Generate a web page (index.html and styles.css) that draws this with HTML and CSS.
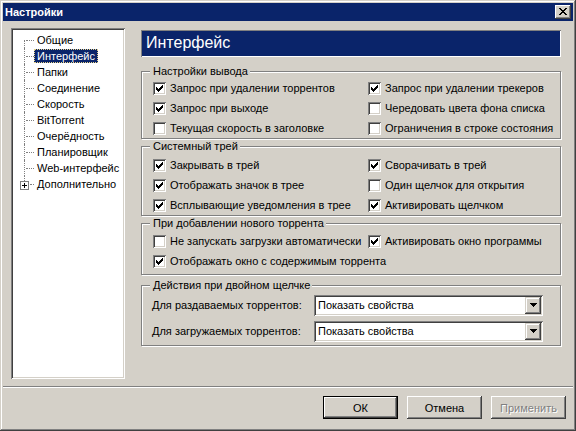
FILE: index.html
```html
<!DOCTYPE html>
<html lang="ru">
<head>
<meta charset="utf-8">
<title>Настройки</title>
<link rel="stylesheet" href="styles.css">
</head>
<body>
<div class="window">
  <div class="titlebar">
    <span class="title">Настройки</span>
    <button class="close" aria-label="Закрыть"><svg width="8" height="7" viewBox="0 0 8 7" shape-rendering="crispEdges"><path d="M0 0h2v1H0zM6 0h2v1H6zM1 1h2v1H1zM5 1h2v1H5zM2 2h4v1H2zM3 3h2v1H3zM2 4h4v1H2zM1 5h2v1H1zM5 5h2v1H5zM0 6h2v1H0zM6 6h2v1H6z"/></svg></button>
  </div>
  <div class="main">
    <ul class="tree">
      <li class="first"><span class="item">Общие</span></li>
      <li><span class="item sel">Интерфейс</span></li>
      <li><span class="item">Папки</span></li>
      <li><span class="item">Соединение</span></li>
      <li><span class="item">Скорость</span></li>
      <li><span class="item">BitTorrent</span></li>
      <li><span class="item">Очерёдность</span></li>
      <li><span class="item">Планировщик</span></li>
      <li><span class="item">Web-интерфейс</span></li>
      <li class="last"><span class="plus"><svg width="5" height="5" viewBox="0 0 5 5" shape-rendering="crispEdges"><path d="M0 2h5v1H0zM2 0h1v5H2z"/></svg></span><span class="item">Дополнительно</span></li>
    </ul>
    <div class="panel">
      <div class="header">Интерфейс</div>

      <fieldset class="group g1">
        <legend>Настройки вывода</legend>
        <div class="grid">
          <label class="cb"><span class="box"><svg class="chk" width="7" height="7" viewBox="0 0 7 7" shape-rendering="crispEdges"><path d="M6 0h1v1H6zM5 1h2v1H5zM0 2h1v1H0zM4 2h3v1H4zM0 3h2v1H0zM3 3h3v1H3zM0 4h5v1H0zM1 5h3v1H1zM2 6h1v1H2z"/></svg></span>Запрос при удалении торрентов</label>
          <label class="cb"><span class="box"><svg class="chk" width="7" height="7" viewBox="0 0 7 7" shape-rendering="crispEdges"><path d="M6 0h1v1H6zM5 1h2v1H5zM0 2h1v1H0zM4 2h3v1H4zM0 3h2v1H0zM3 3h3v1H3zM0 4h5v1H0zM1 5h3v1H1zM2 6h1v1H2z"/></svg></span>Запрос при удалении трекеров</label>
          <label class="cb"><span class="box"><svg class="chk" width="7" height="7" viewBox="0 0 7 7" shape-rendering="crispEdges"><path d="M6 0h1v1H6zM5 1h2v1H5zM0 2h1v1H0zM4 2h3v1H4zM0 3h2v1H0zM3 3h3v1H3zM0 4h5v1H0zM1 5h3v1H1zM2 6h1v1H2z"/></svg></span>Запрос при выходе</label>
          <label class="cb"><span class="box"></span>Чередовать цвета фона списка</label>
          <label class="cb"><span class="box"></span>Текущая скорость в заголовке</label>
          <label class="cb"><span class="box"></span>Ограничения в строке состояния</label>
        </div>
      </fieldset>

      <fieldset class="group g2">
        <legend>Системный трей</legend>
        <div class="grid">
          <label class="cb"><span class="box"><svg class="chk" width="7" height="7" viewBox="0 0 7 7" shape-rendering="crispEdges"><path d="M6 0h1v1H6zM5 1h2v1H5zM0 2h1v1H0zM4 2h3v1H4zM0 3h2v1H0zM3 3h3v1H3zM0 4h5v1H0zM1 5h3v1H1zM2 6h1v1H2z"/></svg></span>Закрывать в трей</label>
          <label class="cb"><span class="box"><svg class="chk" width="7" height="7" viewBox="0 0 7 7" shape-rendering="crispEdges"><path d="M6 0h1v1H6zM5 1h2v1H5zM0 2h1v1H0zM4 2h3v1H4zM0 3h2v1H0zM3 3h3v1H3zM0 4h5v1H0zM1 5h3v1H1zM2 6h1v1H2z"/></svg></span>Сворачивать в трей</label>
          <label class="cb"><span class="box"><svg class="chk" width="7" height="7" viewBox="0 0 7 7" shape-rendering="crispEdges"><path d="M6 0h1v1H6zM5 1h2v1H5zM0 2h1v1H0zM4 2h3v1H4zM0 3h2v1H0zM3 3h3v1H3zM0 4h5v1H0zM1 5h3v1H1zM2 6h1v1H2z"/></svg></span>Отображать значок в трее</label>
          <label class="cb"><span class="box"></span>Один щелчок для открытия</label>
          <label class="cb"><span class="box"><svg class="chk" width="7" height="7" viewBox="0 0 7 7" shape-rendering="crispEdges"><path d="M6 0h1v1H6zM5 1h2v1H5zM0 2h1v1H0zM4 2h3v1H4zM0 3h2v1H0zM3 3h3v1H3zM0 4h5v1H0zM1 5h3v1H1zM2 6h1v1H2z"/></svg></span>Всплывающие уведомления в трее</label>
          <label class="cb"><span class="box"><svg class="chk" width="7" height="7" viewBox="0 0 7 7" shape-rendering="crispEdges"><path d="M6 0h1v1H6zM5 1h2v1H5zM0 2h1v1H0zM4 2h3v1H4zM0 3h2v1H0zM3 3h3v1H3zM0 4h5v1H0zM1 5h3v1H1zM2 6h1v1H2z"/></svg></span>Активировать щелчком</label>
        </div>
      </fieldset>

      <fieldset class="group g3">
        <legend>При добавлении нового торрента</legend>
        <div class="grid">
          <label class="cb"><span class="box"></span>Не запускать загрузки автоматически</label>
          <label class="cb"><span class="box"><svg class="chk" width="7" height="7" viewBox="0 0 7 7" shape-rendering="crispEdges"><path d="M6 0h1v1H6zM5 1h2v1H5zM0 2h1v1H0zM4 2h3v1H4zM0 3h2v1H0zM3 3h3v1H3zM0 4h5v1H0zM1 5h3v1H1zM2 6h1v1H2z"/></svg></span>Активировать окно программы</label>
          <label class="cb span2"><span class="box"><svg class="chk" width="7" height="7" viewBox="0 0 7 7" shape-rendering="crispEdges"><path d="M6 0h1v1H6zM5 1h2v1H5zM0 2h1v1H0zM4 2h3v1H4zM0 3h2v1H0zM3 3h3v1H3zM0 4h5v1H0zM1 5h3v1H1zM2 6h1v1H2z"/></svg></span>Отображать окно с содержимым торрента</label>
        </div>
      </fieldset>

      <fieldset class="group g4">
        <legend>Действия при двойном щелчке</legend>
        <div class="form">
          <span class="flabel">Для раздаваемых торрентов:</span>
          <div class="combo"><span class="cval">Показать свойства</span><span class="cbtn"><svg width="7" height="4" viewBox="0 0 7 4" shape-rendering="crispEdges"><path d="M0 0h7v1H0zM1 1h5v1H1zM2 2h3v1H2zM3 3h1v1H3z"/></svg></span></div>
          <span class="flabel">Для загружаемых торрентов:</span>
          <div class="combo"><span class="cval">Показать свойства</span><span class="cbtn"><svg width="7" height="4" viewBox="0 0 7 4" shape-rendering="crispEdges"><path d="M0 0h7v1H0zM1 1h5v1H1zM2 2h3v1H2zM3 3h1v1H3z"/></svg></span></div>
        </div>
      </fieldset>
    </div>
  </div>
  <div class="footer">
    <button class="btn default">ОК</button>
    <button class="btn">Отмена</button>
    <button class="btn disabled">Применить</button>
  </div>
</div>
</body>
</html>
```

FILE: styles.css
```css
* { box-sizing: border-box; }
html, body { margin: 0; padding: 0; }
body {
  font: 11px "Liberation Sans", Arial, sans-serif;
  color: #000;
  background: #d4d0c8;
}
.window {
  width: 576px;
  height: 431px;
  padding: 3px;
  background: #d4d0c8;
  box-shadow: inset -1px -1px #404040, inset 1px 1px #d4d0c8, inset -2px -2px #808080, inset 2px 2px #fff;
  display: flex;
  flex-direction: column;
}
.titlebar {
  height: 18px;
  flex: none;
  background: #0a246a;
  color: #fff;
  font-weight: bold;
  display: flex;
  align-items: center;
  justify-content: space-between;
  padding: 0 2px 0 2px;
}
.close {
  width: 16px;
  height: 14px;
  padding: 0;
  border: 0;
  background: #d4d0c8;
  box-shadow: inset -1px -1px #404040, inset 1px 1px #fff, inset -2px -2px #808080;
  display: flex;
  align-items: center;
  justify-content: center;
}
.close svg { display: block; margin: 0 1px 1px 0; }

.main {
  flex: 1;
  display: flex;
  gap: 16px;
  padding: 7px 12px 7px 8px;
}

/* tree */
.tree {
  width: 114px;
  flex: none;
  margin: 0;
  padding: 4px 0 0 0;
  list-style: none;
  background: #fff;
  box-shadow: inset 1px 1px #808080, inset -1px -1px #fff, inset 2px 2px #404040, inset -2px -2px #d4d0c8;
}
.tree li {
  position: relative;
  height: 16px;
  display: flex;
  align-items: center;
  padding-left: 23px;
}
.tree li::before {
  content: "";
  position: absolute;
  left: 13px;
  top: 0;
  height: 16px;
  border-left: 1px dotted #808080;
}
.tree li.first::before { top: 8px; height: 8px; }
.tree li.last::before { height: 5px; }
.tree li::after {
  content: "";
  position: absolute;
  left: 15px;
  top: 8px;
  width: 8px;
  border-top: 1px dotted #808080;
}
.tree li.last::after { left: 19px; width: 4px; }
.item {
  display: inline-block;
  height: 14px;
  line-height: 12px;
  padding: 0 2px;
  border: 1px dotted transparent;
  white-space: nowrap;
}
.item.sel {
  background: #0a246a;
  color: #fff;
  border-color: #e8d48a;
}
.plus {
  position: absolute;
  left: 9px;
  top: 5px;
  width: 9px;
  height: 9px;
  border: 1px solid #808080;
  background: #fff;
  display: flex;
  align-items: center;
  justify-content: center;
  z-index: 1;
}
.plus svg { display: block; }

/* right panel */
.panel {
  flex: 1;
  display: flex;
  flex-direction: column;
  gap: 1px;
  margin-top: 2px;
}
.header {
  height: 27px;
  margin-bottom: 7px;
  background: #0a246a;
  color: #fff;
  font-size: 16px;
  line-height: 25px;
  padding-left: 5px;
  box-shadow: inset 1px 1px #808080, inset -1px -1px #fff;
}
.group {
  margin: 0;
  min-width: 0;
  padding: 0 0 0 8px;
  border: 1px solid #808080;
  box-shadow: 1px 1px 0 #fff, inset 1px 1px 0 #fff;
}
.group legend {
  padding: 0 2px 0 3px;
  line-height: 13px;
  background: #d4d0c8;
}
.g2 { padding-top: 2px; }
.g3 { padding-top: 1px; padding-bottom: 3px; }
.g4 { margin-top: 3px; }
.grid {
  display: grid;
  grid-template-columns: 215px 1fr;
  padding-left: 3px;
}
.span2 { grid-column: 1 / -1; }
.cb {
  height: 20px;
  display: flex;
  align-items: center;
  gap: 4px;
  white-space: nowrap;
}
.box {
  width: 13px;
  height: 13px;
  flex: none;
  background: #fff;
  box-shadow: inset 1px 1px #808080, inset -1px -1px #fff, inset 2px 2px #404040, inset -2px -2px #d4d0c8;
  display: flex;
  align-items: center;
  justify-content: center;
}
.chk { display: block; }

.form {
  display: grid;
  grid-template-columns: 162px 229px;
  grid-auto-rows: 26px;
  align-items: center;
  padding-left: 2px;
  padding-bottom: 1px;
}
.combo {
  height: 21px;
  display: flex;
  align-items: center;
  background: #fff;
  padding: 2px;
  box-shadow: inset 1px 1px #808080, inset -1px -1px #fff, inset 2px 2px #404040, inset -2px -2px #d4d0c8;
}
.cval { flex: 1; padding-left: 2px; }
.cbtn {
  width: 16px;
  height: 17px;
  background: #d4d0c8;
  box-shadow: inset -1px -1px #404040, inset 1px 1px #d4d0c8, inset -2px -2px #808080, inset 2px 2px #fff;
  display: flex;
  align-items: center;
  justify-content: center;
}
.cbtn svg { display: block; }

/* footer */
.footer {
  height: 42px;
  flex: none;
  border-top: 1px solid #808080;
  box-shadow: inset 0 1px #fff;
  display: flex;
  justify-content: flex-end;
  align-items: flex-start;
  gap: 9px;
  padding: 9px 7px 0 0;
}
.btn {
  width: 75px;
  height: 23px;
  padding: 0;
  border: 0;
  font: 11px "Liberation Sans", Arial, sans-serif;
  color: #000;
  background: #d4d0c8;
  box-shadow: inset -1px -1px #404040, inset 1px 1px #fff, inset -2px -2px #808080;
}
.btn.default {
  box-shadow: inset 0 0 0 1px #000, inset -2px -2px #404040, inset 2px 2px #fff, inset -3px -3px #808080;
}
.btn.disabled {
  color: #808080;
  text-shadow: 1px 1px 0 #fff;
}
```
